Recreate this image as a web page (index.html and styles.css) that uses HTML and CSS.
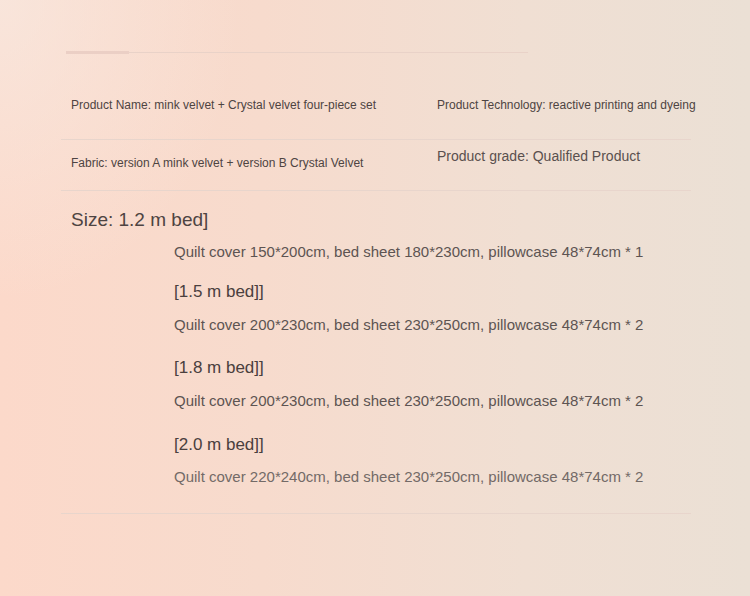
FILE: index.html
```html
<!DOCTYPE html>
<html lang="en">
<head>
<meta charset="utf-8">
<title>Product details</title>
<link rel="stylesheet" href="styles.css">
</head>
<body>
<div class="page">
  <div class="tabbar"><span class="tab-active"></span></div>
  <div class="info-row row-one">
    <div class="cell small">Product Name: mink velvet + Crystal velvet four-piece set</div>
    <div class="cell small">Product Technology: reactive printing and dyeing</div>
  </div>
  <div class="info-row row-two">
    <div class="cell small fabric">Fabric: version A mink velvet + version B Crystal Velvet</div>
    <div class="cell medium grade">Product grade: Qualified Product</div>
  </div>
  <div class="sizes">
    <div class="size-title">Size: 1.2 m bed]</div>
    <div class="size-list">
      <div class="dims first">Quilt cover 150*200cm, bed sheet 180*230cm, pillowcase 48*74cm * 1</div>
      <div class="size-head head-first">[1.5 m bed]]</div>
      <div class="dims">Quilt cover 200*230cm, bed sheet 230*250cm, pillowcase 48*74cm * 2</div>
      <div class="size-head">[1.8 m bed]]</div>
      <div class="dims">Quilt cover 200*230cm, bed sheet 230*250cm, pillowcase 48*74cm * 2</div>
      <div class="size-head head-last">[2.0 m bed]]</div>
      <div class="dims last">Quilt cover 220*240cm, bed sheet 230*250cm, pillowcase 48*74cm * 2</div>
    </div>
  </div>
</div>
</body>
</html>
```
FILE: styles.css
```css
html, body {
  margin: 0;
  padding: 0;
}
body {
  width: 750px;
  height: 596px;
  overflow: hidden;
  font-family: "Liberation Sans", Arial, sans-serif;
  color: #4e4442;
  background:
    radial-gradient(ellipse 240px 300px at 0 0, rgba(247, 234, 226, 0.7), rgba(247, 234, 226, 0) 100%),
    linear-gradient(90deg, #fcd9ca 0%, #f7dbcd 35%, #f0dfd3 70%, #ebe0d5 100%);
}
.page {
  padding: 51px 59px 0 61px;
}
.tabbar {
  margin-left: 5px;
  width: 462px;
  height: 3px;
  display: flex;
  align-items: center;
  background: linear-gradient(#0000 0, #0000 1px, #e9d2c8 1px, #e9d2c8 2px, #0000 2px);
}
.tab-active {
  width: 63px;
  height: 3px;
  background: #ebcfc5;
}
.info-row {
  display: grid;
  grid-template-columns: 366px 1fr;
  padding-left: 10px;
  border-bottom: 1px solid #e8d5cc;
  align-items: start;
}
.row-one {
  padding-top: 43px;
  height: 86px;
  box-sizing: border-box;
}
.row-two {
  height: 51px;
  box-sizing: border-box;
}
.cell {
  white-space: nowrap;
}
.small {
  font-size: 12px;
  line-height: 16px;
}
.medium {
  font-size: 14px;
  line-height: 16px;
  color: #5a504e;
}
.fabric {
  margin-top: 15px;
}
.grade {
  margin-top: 8px;
}
.sizes {
  padding-left: 10px;
  padding-bottom: 26px;
  border-bottom: 1px solid #e8d5cc;
}
.size-title {
  margin-top: 18px;
  font-size: 19px;
  line-height: 22px;
  color: #4e4442;
}
.size-list {
  padding-left: 103px;
}
.dims {
  margin-top: 12px;
  font-size: 15px;
  line-height: 20px;
  color: #5d5452;
}
.dims.first {
  margin-top: 11px;
}
.dims.last {
  margin-top: 11px;
  color: #736a67;
}
.size-head {
  margin-top: 22px;
  font-size: 17px;
  line-height: 22px;
  color: #4a403e;
}
.size-head.head-first {
  margin-top: 19px;
}
.size-head.head-last {
  margin-top: 23px;
}
```
